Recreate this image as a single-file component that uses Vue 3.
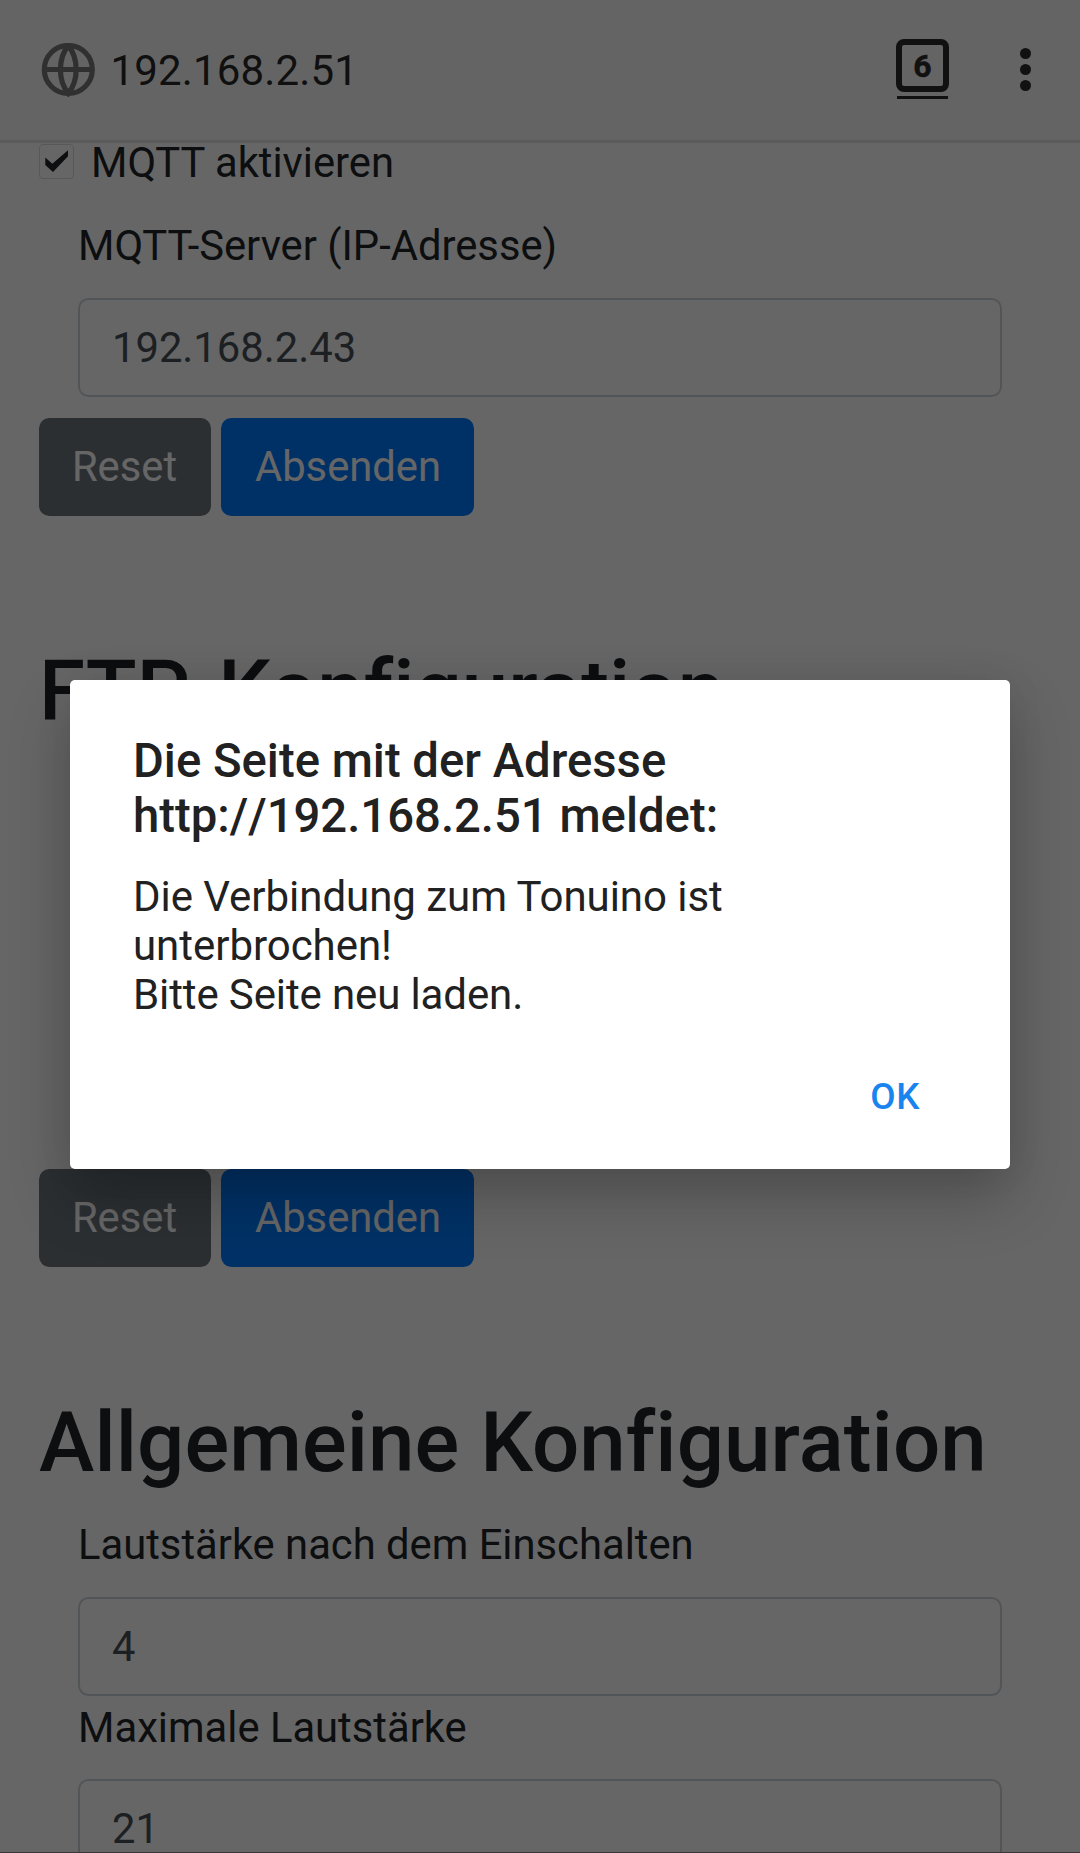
<script setup>
const message = ['Die Verbindung zum Tonuino ist', 'unterbrochen!', 'Bitte Seite neu laden.']
const settings = [
  { label: 'Lautstärke nach dem Einschalten', value: '4' },
  { label: 'Maximale Lautstärke', value: '21' },
]
</script>

<template>
  <div class="screen">
    <header class="toolbar">
      <svg class="globe" width="54" height="54" viewBox="0 0 54 54" fill="none" stroke="#787878" stroke-width="5.2">
        <circle cx="27.3" cy="26.500" r="24" />
        <path d="M27.300 2.500C16.800 15.500 16.800 37.500 27.300 50.500C37.800 37.500 37.800 15.500 27.300 2.500Z" />
        <path d="M3.300 26.500H51.300" />
      </svg>
      <span class="address">192.168.2.51</span>
      <div class="tabs">
        <div class="tab-count">6</div>
        <div class="tab-line"></div>
      </div>
      <div class="menu"><i></i><i></i><i></i></div>
    </header>

    <main class="page">
      <div class="check-row">
        <span class="checkbox">
          <svg width="35" height="35" viewBox="0 0 35 35">
            <path d="M6.300 13.600L13.300 19.800L29 6.200V12.300L14 28L6.300 21Z" fill="#212529" />
          </svg>
        </span>
        <span>MQTT aktivieren</span>
      </div>
      <div class="group first">
        <label>MQTT-Server (IP-Adresse)</label>
        <div class="input">192.168.2.43</div>
      </div>
      <div class="buttons spaced">
        <button class="reset">Reset</button>
        <button class="send">Absenden</button>
      </div>

      <section class="ftp">
        <h2>FTP-Konfiguration</h2>
        <div class="buttons">
          <button class="reset">Reset</button>
          <button class="send">Absenden</button>
        </div>
      </section>

      <section class="general">
        <h2>Allgemeine Konfiguration</h2>
        <div v-for="s in settings" :key="s.label" class="group">
          <label>{{ s.label }}</label>
          <div class="input">{{ s.value }}</div>
        </div>
      </section>
    </main>

    <div class="scrim">
      <div class="dialog">
        <div class="dialog-title">
          <div>Die Seite mit der Adresse</div>
          <div>http:<span class="slashes">//</span>192.168.2.51 meldet:</div>
        </div>
        <div class="dialog-body">
          <div v-for="line in message" :key="line">{{ line }}</div>
        </div>
        <div class="actions"><button class="ok">OK</button></div>
      </div>
    </div>
  </div>
</template>

<style>
body {
  margin: 0;
  background: #666;
}
</style>

<style scoped>
.screen {
  position: relative;
  box-sizing: border-box;
  width: 1080px;
  height: 1853px;
  overflow: hidden;
  background: #fff;
  border-bottom: 1px solid #393539;
  font-family: Roboto, sans-serif;
  font-size: 41.74px;
  line-height: 62.6px;
  font-variant-ligatures: none;
  color: #212529;
  display: flex;
  flex-direction: column;
}
button {
  font: inherit;
  font-variant-ligatures: none;
  border: 0;
  margin: 0;
  padding: 0;
}
.toolbar {
  box-sizing: border-box;
  height: 143px;
  flex: none;
  display: flex;
  align-items: center;
  background: #fafafa;
  border-bottom: 3px solid #e3e3e3;
  padding: 0 49px 0 41px;
}
.globe {
  flex: none;
  margin-top: -1px;
}
.address {
  margin-left: 15.5px;
  padding-top: 2px;
  font-size: 42px;
  letter-spacing: 0.15px;
  color: #2a2a2a;
  flex: 1;
}
.tabs {
  width: 53px;
  height: 60px;
  display: flex;
  flex-direction: column;
  align-items: center;
  margin-right: 71px;
  margin-top: -2px;
}
.tab-count {
  box-sizing: border-box;
  width: 53px;
  height: 53px;
  border: 6px solid #2c2c2c;
  border-radius: 8px;
  font-size: 32px;
  font-weight: 700;
  line-height: 43px;
  text-align: center;
  color: #2c2c2c;
  -webkit-text-stroke: 0.5px #2c2c2c;
}
.tab-line {
  width: 51px;
  height: 3px;
  margin-top: 4px;
  background: #2c2c2c;
}
.menu {
  display: flex;
  flex-direction: column;
  gap: 5px;
  margin-top: -1px;
}
.menu i {
  width: 11px;
  height: 11px;
  border-radius: 50%;
  background: #2c2c2c;
}
.page {
  flex: 1;
  min-height: 0;
  overflow: hidden;
  padding: 0 39px;
}
.check-row {
  display: flex;
  height: 62.6px;
  margin-top: -10.8px;
}
.checkbox {
  box-sizing: border-box;
  width: 35px;
  height: 35px;
  flex: none;
  margin: 11.5px 17px 0 0;
  border: 1px solid #dcdcdc;
  border-radius: 4px;
  display: flex;
  align-items: center;
  justify-content: center;
}
.checkbox svg {
  flex: none;
}
.group {
  padding: 0 39px;
}
.group.first {
  margin-top: 19.6px;
}
label {
  display: block;
  padding-top: 1px;
  margin-bottom: 19.9px;
}
.input {
  box-sizing: border-box;
  height: 99px;
  border: 2px solid #ced4da;
  border-radius: 10.4px;
  padding: 17px 32px 15px;
  color: #495057;
}
.buttons {
  display: flex;
  gap: 10px;
}
.buttons.spaced {
  margin-top: 21px;
}
.buttons button {
  height: 98px;
  border-radius: 10.4px;
  color: #fff;
}
.buttons .reset {
  width: 172px;
  padding-right: 1px;
  background: #6c757d;
}
.buttons .send {
  width: 253px;
  padding-left: 1px;
  background: #007bff;
}
h2 {
  margin: 125.4px 0 20.9px;
  font-size: 83.48px;
  line-height: 100.2px;
  font-weight: 500;
}
.general h2 {
  margin: 126.2px 0 20px;
  letter-spacing: 0.06px;
}
.ftp {
  display: flex;
  flex-direction: column;
  justify-content: space-between;
  height: 751px;
}
.scrim {
  position: absolute;
  inset: 0;
  background: rgba(0, 0, 0, 0.6);
}
.dialog {
  box-sizing: border-box;
  width: 940px;
  height: 489px;
  margin: 680px 0 0 70px;
  padding: 54px 63px 0;
  background: #fff;
  border-radius: 5px;
  color: #212121;
  box-shadow: 0 28px 62px rgba(0, 0, 0, 0.24), 0 0 40px rgba(0, 0, 0, 0.06);
}
.dialog-title {
  font-size: 47.25px;
  line-height: 55.3px;
  font-weight: 500;
}
.slashes {
  font-kerning: none;
}
.dialog-body {
  margin-top: 27.5px;
  font-size: 42px;
  line-height: 49px;
  letter-spacing: -0.04px;
}
.dialog-body div:last-child {
  letter-spacing: -0.12px;
}
.actions {
  display: flex;
  justify-content: flex-end;
  margin-top: 56px;
  padding-right: 27px;
}
.ok {
  background: none;
  color: #1a84ee;
  font-size: 36.75px;
  line-height: 43px;
  font-weight: 500;
  letter-spacing: 0.6px;
}
</style>
